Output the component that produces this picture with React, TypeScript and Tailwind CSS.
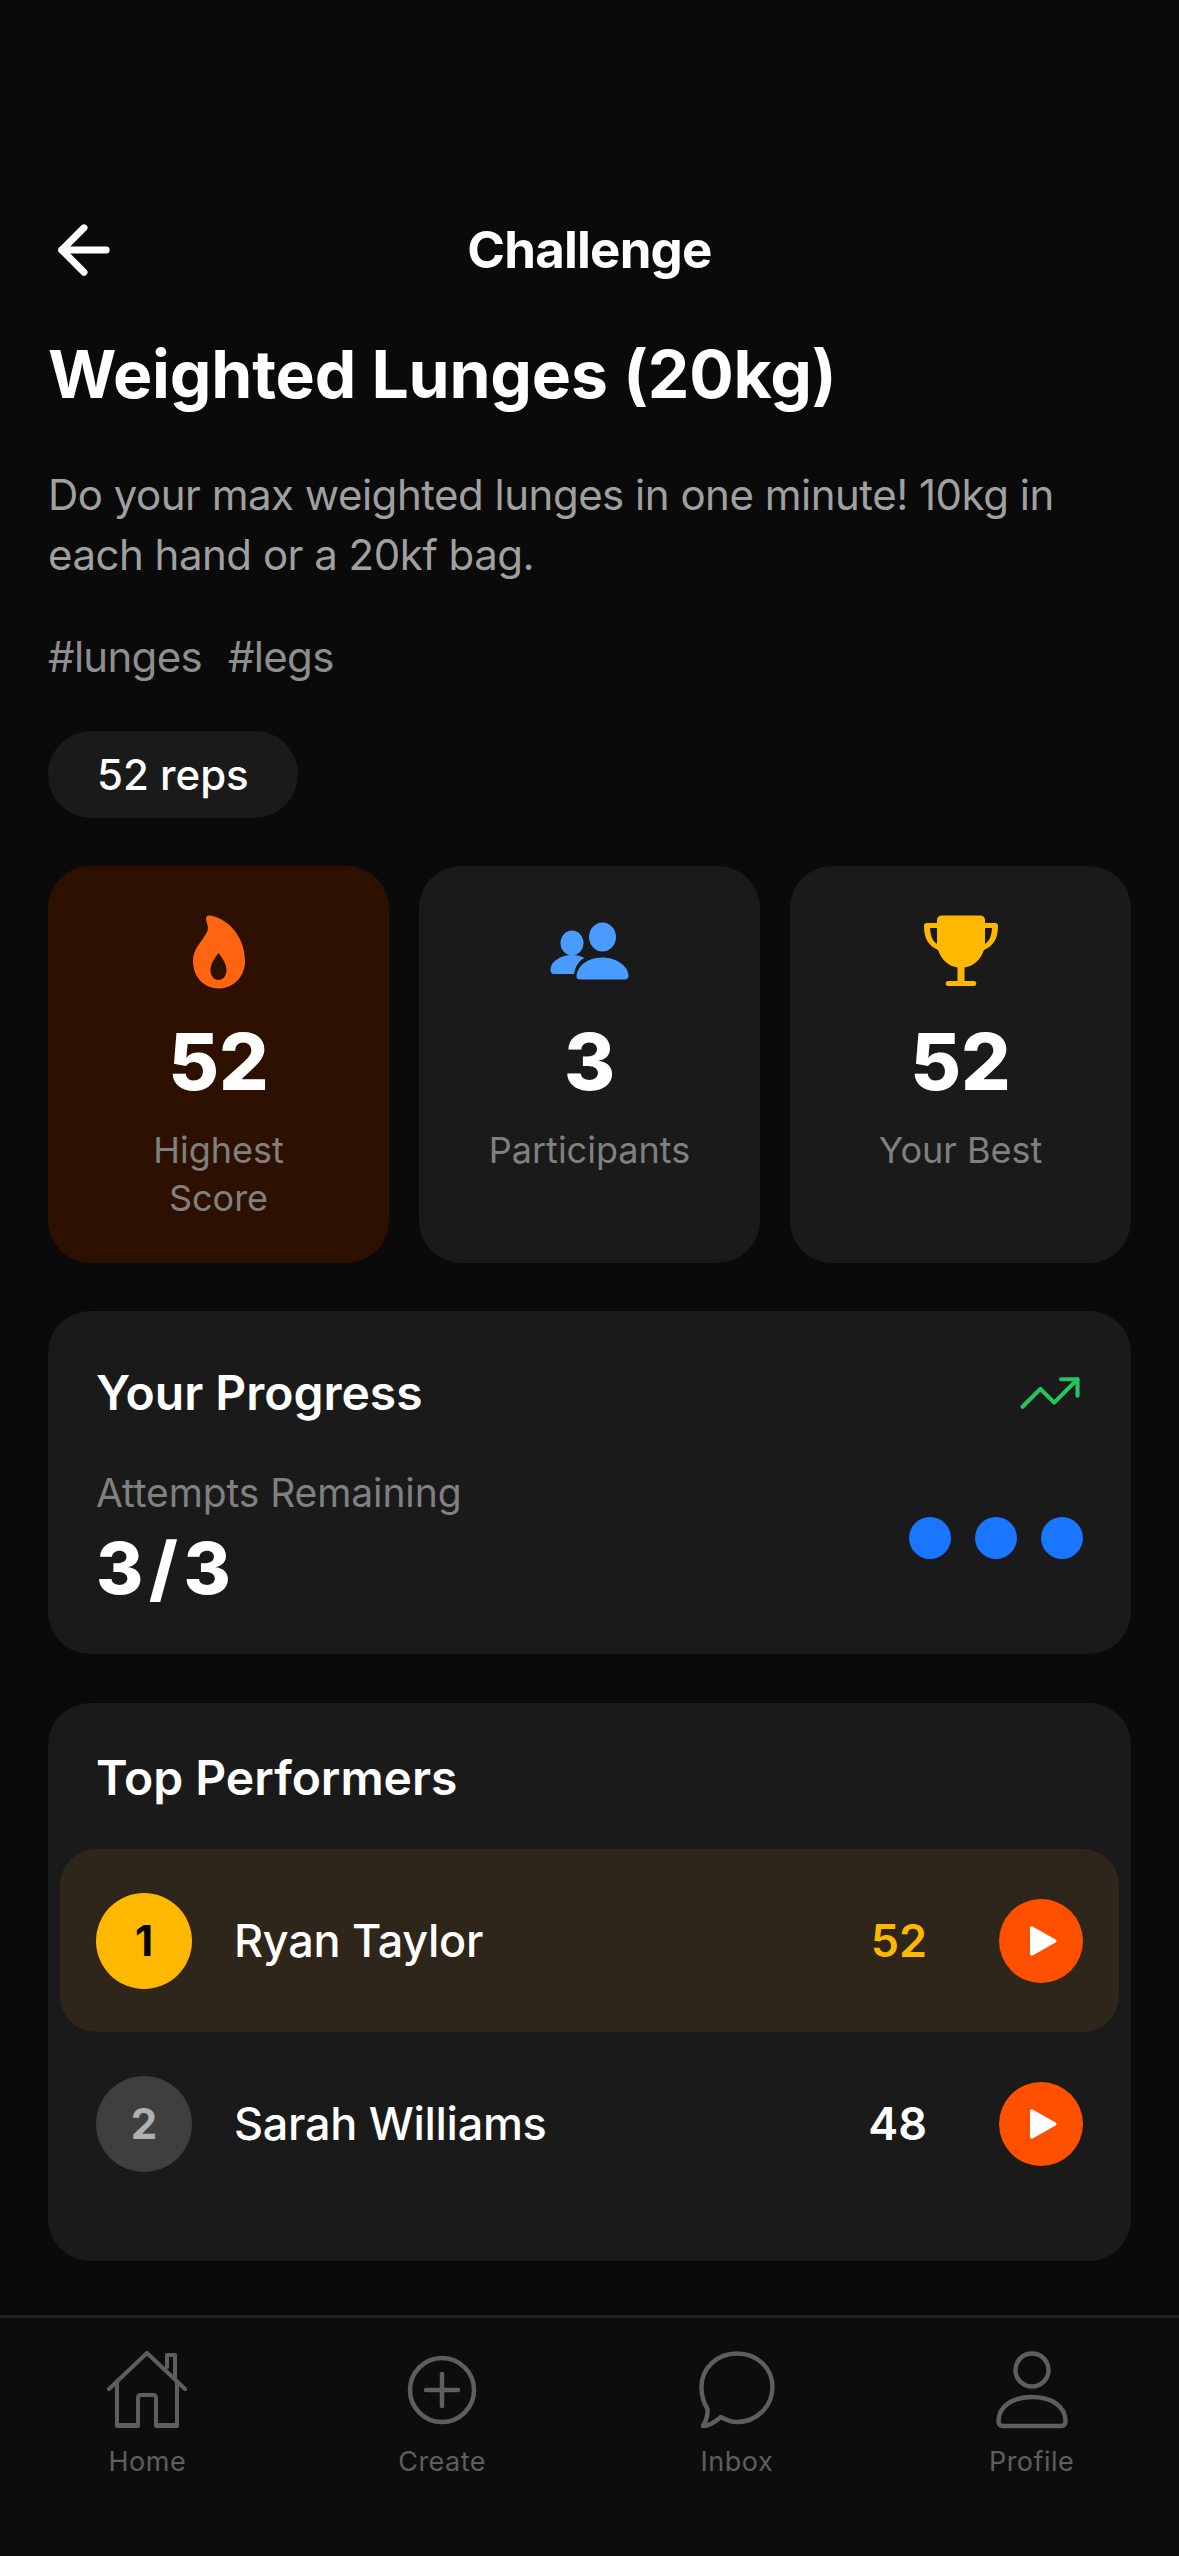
import React from 'react';
import { ArrowLeft, TrendingUp } from 'lucide-react';

function Flame() {
  return (
    <svg width="54" height="74" viewBox="0 0 54 74">
      <path
        fillRule="evenodd"
        fill="#ff6411"
        d="M17 0.500C30 1 53 17 53 46C53 62 41 73.500 27 73.500C12 73.500 1 62 1 46C1 33 10 27 15 17C17.500 12 14 7 14 3.500C14 1.500 15 0.500 17 0.500ZM26.500 38C22 44 18.500 49 18.500 55C18.500 61 22 65 26.500 65C31 65 34.500 61 34.500 55C34.500 49 31 44 26.500 38Z"
      />
    </svg>
  );
}

function People() {
  return (
    <svg width="80" height="60" viewBox="0 0 80 60" fill="#4a9bff">
      <ellipse cx="22" cy="21" rx="11.500" ry="12.500" />
      <ellipse cx="52.500" cy="15" rx="13.500" ry="14.500" />
      <path d="M0.500 47C1 40 10 33 22 33C27 33 31 34 34.500 36C29 38.500 25.500 44 24 52H4C1.500 52 0.500 50 0.500 47Z" />
      <path d="M26.500 53C28 44 37 35.500 52 35.500C67 35.500 77.500 44 78.500 53C78.800 56 77 57.500 75 57.500H30C27.500 57.500 26 56 26.500 53Z" />
    </svg>
  );
}

function Trophy() {
  return (
    <svg width="74" height="74" viewBox="0 0 74 74" fill="#ffb800">
      <path d="M13 5C13 2 15 0.500 18 0.500H56C59 0.500 61 2 61 5V8H71C73 8 74 9 74 11C74 24 69 31 60 35C56 46 49 51 40.500 52.500V66H50C53 66 53 71 50 71H24C21 71 21 66 24 66H33.500V52.500C25 51 18 46 14 35C5 31 0 24 0 11C0 9 1 8 3 8H13ZM6 13C6.500 21 8.500 26 13 29C13 24 13 19 13 13ZM68 13H61C61 19 61 24 61 29C65.500 26 67.500 21 68 13Z" />
    </svg>
  );
}

function Play() {
  return (
    <div className="flex h-[84px] w-[84px] shrink-0 items-center justify-center rounded-full bg-[#ff5000]">
      <svg width="28" height="30" viewBox="0 0 28 30" className="ml-[4px]" fill="#fff">
        <path d="M1 2C1 0.500 2.500 0 4 0.800L26.500 13.500C27.800 14.300 27.800 15.700 26.500 16.500L4 29.200C2.500 30 1 29.500 1 28Z" />
      </svg>
    </div>
  );
}

function NavIcon({ name }: { name: string }) {
  const cls = 'fill-none stroke-[#5e5e5e]';
  if (name === 'Home') {
    return (
      <svg width="80" height="78" viewBox="0 0 80 78" className={cls} strokeWidth="4" strokeLinejoin="round" strokeLinecap="round">
        <path d="M2 38L40 2L78 38" />
        <path d="M10 30V74H31V47C31 45 32 44 34 44H46C48 44 49 45 49 47V74H70V30" />
        <path d="M60 16V4H68V27" />
        <path d="M10 75H31M49 75H70" />
      </svg>
    );
  }
  if (name === 'Create') {
    return (
      <svg width="72" height="74" viewBox="0 0 72 74" className={cls} strokeWidth="4.500" strokeLinecap="round">
        <circle cx="36" cy="37" r="32" />
        <path d="M36 21V53M20 37H52" />
      </svg>
    );
  }
  if (name === 'Inbox') {
    return (
      <svg width="76" height="78" viewBox="0 0 76 78" className={cls} strokeWidth="4.500" strokeLinejoin="round">
        <path d="M38 2.500C58 2.500 73.500 17 73.500 36C73.500 55 58 71 38 71C32 71 27 69 22 66C16 71 10 75 4 75C7 70 9 64 8.500 58C4 51 2.500 44 2.500 36C2.500 17 18 2.500 38 2.500Z" />
      </svg>
    );
  }
  return (
    <svg width="72" height="78" viewBox="0 0 72 78" className={cls} strokeWidth="4.500" strokeLinejoin="round">
      <circle cx="36" cy="19" r="16.500" />
      <path d="M2.500 70C2.500 55 17 46 36 46C55 46 69.500 55 69.500 70C69.500 73 68 75 65 75H7C4 75 2.500 73 2.500 70Z" />
    </svg>
  );
}

const stats = [
  { value: '52', label: 'Highest Score', bg: 'bg-[#2d1000]', icon: <Flame /> },
  { value: '3', label: 'Participants', bg: 'bg-[#1a1a1a]', icon: <People /> },
  { value: '52', label: 'Your Best', bg: 'bg-[#1a1a1a]', icon: <Trophy /> },
];

const performers = [
  { rank: 1, name: 'Ryan Taylor', score: 52 },
  { rank: 2, name: 'Sarah Williams', score: 48 },
];

export default function App() {
  return (
    <div className="flex h-[2556px] w-[1179px] flex-col overflow-hidden bg-[#0a0a0a] font-['Inter',sans-serif] text-white">
      <div className="flex-1 px-[48px] pt-[210px]">
        {/* Header */}
        <div className="relative flex h-[80px] items-center justify-center">
          <ArrowLeft className="absolute left-[-2px] h-[76px] w-[76px]" strokeWidth={2.2} />
          <h2 className="-mt-[2px] text-[51px] font-bold leading-none tracking-[-0.8px]">Challenge</h2>
        </div>

        <h1 className="mt-[44px] text-[66px] font-bold leading-[80px] tracking-[-0.2px]">Weighted Lunges (20kg)</h1>

        <p className="mt-[51px] text-[42px] leading-[60px] tracking-[-0.5px] text-[#a0a0a0]">
          Do your max weighted lunges in one minute! 10kg in each hand or a 20kf bag.
        </p>

        <div className="mt-[42px] flex gap-[26px] text-[42px] leading-[60px] tracking-[-0.7px] text-[#8e8e8e]">
          <span>#lunges</span>
          <span>#legs</span>
        </div>

        <div className="mt-[44px] inline-flex h-[87px] items-center rounded-full bg-[#1a1a1a] px-[49px] text-[42px] font-medium">
          52 reps
        </div>

        {/* Stats */}
        <div className="mt-[48px] grid grid-cols-3 gap-[30px]">
          {stats.map((s) => (
            <div key={s.label} className={`flex h-[397px] flex-col items-center rounded-[42px] px-[60px] pt-[46px] ${s.bg}`}>
              <div className="flex h-[80px] items-center justify-center">{s.icon}</div>
              <div className="mt-[25px] text-[78px] font-extrabold leading-[90px]">{s.value}</div>
              <div className="mt-[19px] text-center text-[36px] leading-[48px] text-[#808080]">{s.label}</div>
            </div>
          ))}
        </div>

        {/* Progress */}
        <div className="mt-[48px] h-[343px] rounded-[42px] bg-[#1a1a1a] px-[48px] pt-[49px]">
          <div className="flex items-center justify-between">
            <div className="text-[48px] font-semibold leading-[64px]">Your Progress</div>
            <TrendingUp className="h-[66px] w-[66px] text-[#22c55e]" strokeWidth={1.5} />
          </div>
          <div className="mt-[39px] flex items-center justify-between">
            <div>
              <div className="text-[39px] leading-[56px] tracking-[-0.1px] text-[#808080]">Attempts Remaining</div>
              <div className="mt-[5px] text-[72px] font-extrabold leading-[84px] tracking-[-5px]">3 / 3</div>
            </div>
            <div className="flex gap-[24px]">
              <div className="h-[42px] w-[42px] rounded-full bg-[#1a75ff]" />
              <div className="h-[42px] w-[42px] rounded-full bg-[#1a75ff]" />
              <div className="h-[42px] w-[42px] rounded-full bg-[#1a75ff]" />
            </div>
          </div>
        </div>

        {/* Top performers */}
        <div className="mt-[49px] h-[558px] rounded-[42px] bg-[#1a1a1a] px-[12px] pt-[43px]">
          <div className="px-[36px] text-[48px] font-semibold leading-[64px]">Top Performers</div>
          <div className="mt-[39px]">
            {performers.map((p) => (
              <div
                key={p.rank}
                className={`flex h-[183px] items-center rounded-[36px] px-[36px] ${p.rank === 1 ? 'bg-[#2e261a]' : ''}`}
              >
                <div
                  className={`flex h-[96px] w-[96px] shrink-0 items-center justify-center rounded-full text-[42px] font-bold ${
                    p.rank === 1 ? 'bg-[#ffb800] text-black' : 'bg-[#3f3f3f] text-[#b0b0b0]'
                  }`}
                >
                  {p.rank}
                </div>
                <div className="ml-[42px] flex-1 text-[45px] font-medium tracking-[-0.3px]">{p.name}</div>
                <div className={`mr-[72px] text-[45px] font-semibold ${p.rank === 1 ? 'text-[#ffb800]' : 'text-white'}`}>{p.score}</div>
                <Play />
              </div>
            ))}
          </div>
        </div>
      </div>

      {/* Bottom nav */}
      <div className="grid h-[241px] grid-cols-4 border-t-[3px] border-[#1f1f1f] bg-[#0d0d0d] pt-[32px]">
        {['Home', 'Create', 'Inbox', 'Profile'].map((n) => (
          <div key={n} className="flex flex-col items-center">
            <div className="flex h-[80px] items-center justify-center">
              <NavIcon name={n} />
            </div>
            <div className="mt-[12px] text-[27px] tracking-[0.5px] text-[#5e5e5e]">{n}</div>
          </div>
        ))}
      </div>
    </div>
  );
}
